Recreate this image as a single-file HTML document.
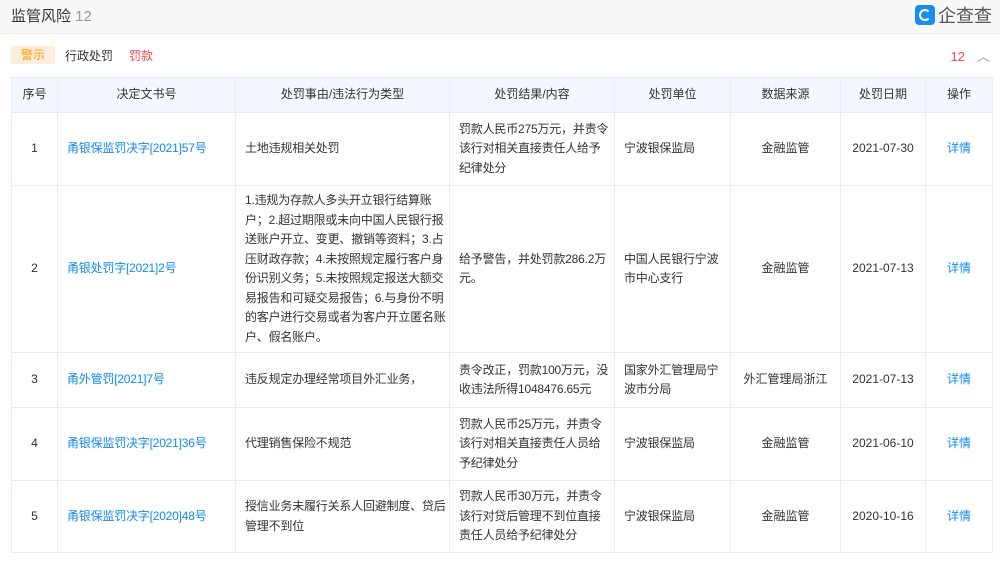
<!DOCTYPE html>
<html><head><meta charset="utf-8"><style>
body{margin:0;width:1000px;height:561px;background:#fff;font-family:"Liberation Sans","Noto Sans CJK SC",sans-serif;color:#333;overflow:hidden;position:relative}
.top{height:33px;background:#f8f8f8;border-bottom:1px solid #eee;position:relative}
.top .t{position:absolute;left:11px;top:5px;font-size:15px;color:#333}
.top .t span{color:#999}
.logo{position:absolute;right:8px;top:2px;display:flex;align-items:center;font-size:18px;color:#555}
.logo i{display:inline-block;width:20px;height:20px;background:#1a8ef0;border-radius:4px;margin-right:3px;position:relative}
.logo i:after{content:"";position:absolute;left:4px;top:4px;width:8px;height:8px;border:2px solid #fff;border-radius:50%;border-right-color:transparent}
.tabs{position:absolute;top:46px;left:11px;font-size:12px;display:flex;align-items:center}
.tag{background:#ffeedd;color:#f90;padding:0 10px;height:18px;line-height:18px;margin-right:10px}
.cnt{position:absolute;right:10px;top:46px;font-size:13px;color:#f04a4a}
.cnt b{font-weight:normal;color:#999;margin-left:12px}
table{position:absolute;left:11px;top:77px;border-collapse:collapse;table-layout:fixed;font-size:12px;line-height:19.5px}
td,th{border:1px solid #e8eef5;padding:0 4px;vertical-align:middle}
th{background:#f2f8fd;font-weight:normal;height:34px;color:#333}
td{text-align:center}
td.l{text-align:left;letter-spacing:-0.2px;padding:0 3px 0 9px}
a{color:#128bed;text-decoration:none}
</style></head><body>
<div class="top"><div class="t">监管风险 <span>12</span></div><div class="logo"><i></i>企查查</div></div>
<div class="tabs"><span class="tag">警示</span><span style="margin-right:16px">行政处罚</span><span style="color:#f04a4a">罚款</span></div>
<div class="cnt">12<b>︿</b></div>
<table>
<colgroup><col style="width:46px"><col style="width:178px"><col style="width:214px"><col style="width:165px"><col style="width:116px"><col style="width:110px"><col style="width:85px"><col style="width:67px"></colgroup>
<tr><th>序号</th><th>决定文书号</th><th>处罚事由/违法行为类型</th><th>处罚结果/内容</th><th>处罚单位</th><th>数据来源</th><th>处罚日期</th><th>操作</th></tr>
<tr style="height:73px"><td>1</td><td class="l"><a>甬银保监罚决字[2021]57号</a></td><td class="l">土地违规相关处罚</td><td class="l">罚款人民币275万元，并责令该行对相关直接责任人给予纪律处分</td><td class="l">宁波银保监局</td><td>金融监管</td><td>2021-07-30</td><td><a>详情</a></td></tr>
<tr style="height:167px"><td>2</td><td class="l"><a>甬银处罚字[2021]2号</a></td><td class="l">1.违规为存款人多头开立银行结算账户；2.超过期限或未向中国人民银行报送账户开立、变更、撤销等资料；3.占压财政存款；4.未按照规定履行客户身份识别义务；5.未按照规定报送大额交易报告和可疑交易报告；6.与身份不明的客户进行交易或者为客户开立匿名账户、假名账户。</td><td class="l">给予警告，并处罚款286.2万元。</td><td class="l">中国人民银行宁波市中心支行</td><td>金融监管</td><td>2021-07-13</td><td><a>详情</a></td></tr>
<tr style="height:55px"><td>3</td><td class="l"><a>甬外管罚[2021]7号</a></td><td class="l">违反规定办理经常项目外汇业务，</td><td class="l">责令改正，罚款100万元，没收违法所得1048476.65元</td><td class="l">国家外汇管理局宁波市分局</td><td>外汇管理局浙江</td><td>2021-07-13</td><td><a>详情</a></td></tr>
<tr style="height:73px"><td>4</td><td class="l"><a>甬银保监罚决字[2021]36号</a></td><td class="l">代理销售保险不规范</td><td class="l">罚款人民币25万元，并责令该行对相关直接责任人员给予纪律处分</td><td class="l">宁波银保监局</td><td>金融监管</td><td>2021-06-10</td><td><a>详情</a></td></tr>
<tr style="height:72px"><td>5</td><td class="l"><a>甬银保监罚决字[2020]48号</a></td><td class="l">授信业务未履行关系人回避制度、贷后管理不到位</td><td class="l">罚款人民币30万元，并责令该行对贷后管理不到位直接责任人员给予纪律处分</td><td class="l">宁波银保监局</td><td>金融监管</td><td>2020-10-16</td><td><a>详情</a></td></tr>
</table>
</body></html>
